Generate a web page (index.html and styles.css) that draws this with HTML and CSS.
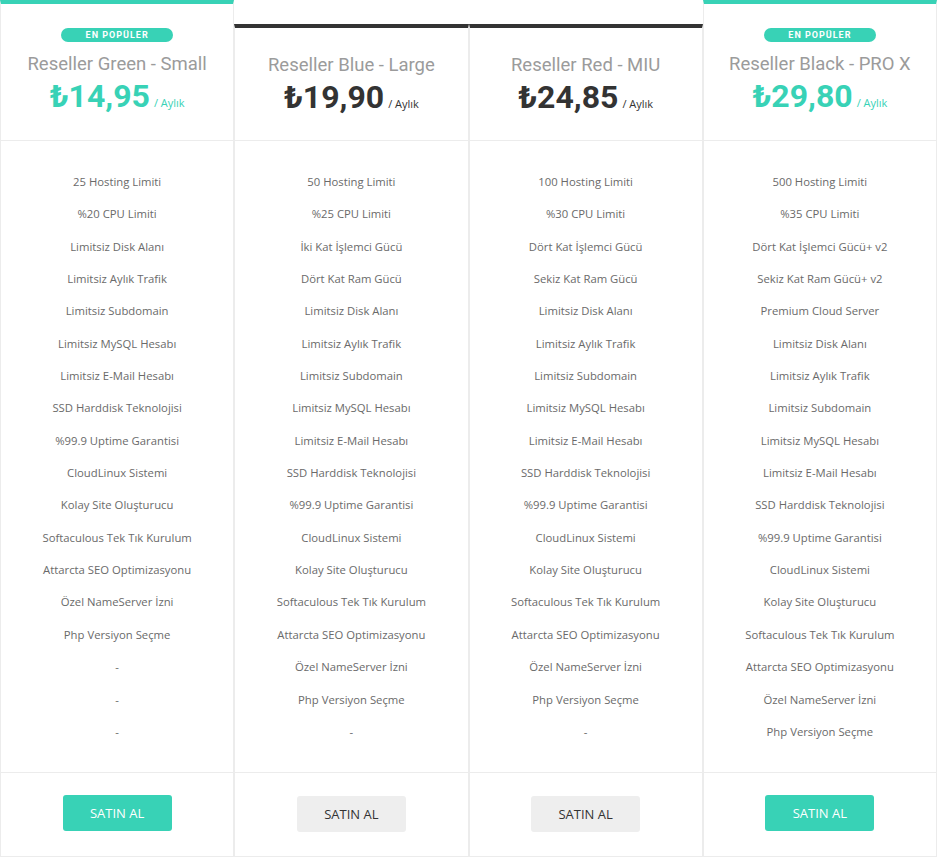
FILE: index.html
```html
<!DOCTYPE html>
<html lang="tr">
<head>
<meta charset="utf-8">
<title>Reseller Paketleri</title>
<link rel="stylesheet" href="styles.css">
</head>
<body>
<div class="plans">
  <div class="plan popular">
    <div class="plan-head">
      <span class="badge">EN POPÜLER</span>
      <div class="title">Reseller Green - Small</div>
      <div class="price"><span class="amount">₺14,95</span><span class="period">/ Aylık</span></div>
    </div>
    <ul class="features">
      <li>25 Hosting Limiti</li>
      <li>%20 CPU Limiti</li>
      <li>Limitsiz Disk Alanı</li>
      <li>Limitsiz Aylık Trafik</li>
      <li>Limitsiz Subdomain</li>
      <li>Limitsiz MySQL Hesabı</li>
      <li>Limitsiz E-Mail Hesabı</li>
      <li>SSD Harddisk Teknolojisi</li>
      <li>%99.9 Uptime Garantisi</li>
      <li>CloudLinux Sistemi</li>
      <li>Kolay Site Oluşturucu</li>
      <li>Softaculous Tek Tık Kurulum</li>
      <li>Attarcta SEO Optimizasyonu</li>
      <li>Özel NameServer İzni</li>
      <li>Php Versiyon Seçme</li>
      <li>-</li>
      <li>-</li>
      <li>-</li>
    </ul>
    <div class="plan-foot"><a class="btn btn-teal" href="#">SATIN AL</a></div>
  </div>

  <div class="plan normal">
    <div class="plan-head">
      <div class="title">Reseller Blue - Large</div>
      <div class="price"><span class="amount">₺19,90</span><span class="period">/ Aylık</span></div>
    </div>
    <ul class="features">
      <li>50 Hosting Limiti</li>
      <li>%25 CPU Limiti</li>
      <li>İki Kat İşlemci Gücü</li>
      <li>Dört Kat Ram Gücü</li>
      <li>Limitsiz Disk Alanı</li>
      <li>Limitsiz Aylık Trafik</li>
      <li>Limitsiz Subdomain</li>
      <li>Limitsiz MySQL Hesabı</li>
      <li>Limitsiz E-Mail Hesabı</li>
      <li>SSD Harddisk Teknolojisi</li>
      <li>%99.9 Uptime Garantisi</li>
      <li>CloudLinux Sistemi</li>
      <li>Kolay Site Oluşturucu</li>
      <li>Softaculous Tek Tık Kurulum</li>
      <li>Attarcta SEO Optimizasyonu</li>
      <li>Özel NameServer İzni</li>
      <li>Php Versiyon Seçme</li>
      <li>-</li>
    </ul>
    <div class="plan-foot"><a class="btn btn-grey" href="#">SATIN AL</a></div>
  </div>

  <div class="plan normal">
    <div class="plan-head">
      <div class="title">Reseller Red - MIU</div>
      <div class="price"><span class="amount">₺24,85</span><span class="period">/ Aylık</span></div>
    </div>
    <ul class="features">
      <li>100 Hosting Limiti</li>
      <li>%30 CPU Limiti</li>
      <li>Dört Kat İşlemci Gücü</li>
      <li>Sekiz Kat Ram Gücü</li>
      <li>Limitsiz Disk Alanı</li>
      <li>Limitsiz Aylık Trafik</li>
      <li>Limitsiz Subdomain</li>
      <li>Limitsiz MySQL Hesabı</li>
      <li>Limitsiz E-Mail Hesabı</li>
      <li>SSD Harddisk Teknolojisi</li>
      <li>%99.9 Uptime Garantisi</li>
      <li>CloudLinux Sistemi</li>
      <li>Kolay Site Oluşturucu</li>
      <li>Softaculous Tek Tık Kurulum</li>
      <li>Attarcta SEO Optimizasyonu</li>
      <li>Özel NameServer İzni</li>
      <li>Php Versiyon Seçme</li>
      <li>-</li>
    </ul>
    <div class="plan-foot"><a class="btn btn-grey" href="#">SATIN AL</a></div>
  </div>

  <div class="plan popular">
    <div class="plan-head">
      <span class="badge">EN POPÜLER</span>
      <div class="title">Reseller Black - PRO X</div>
      <div class="price"><span class="amount">₺29,80</span><span class="period">/ Aylık</span></div>
    </div>
    <ul class="features">
      <li>500 Hosting Limiti</li>
      <li>%35 CPU Limiti</li>
      <li>Dört Kat İşlemci Gücü+ v2</li>
      <li>Sekiz Kat Ram Gücü+ v2</li>
      <li>Premium Cloud Server</li>
      <li>Limitsiz Disk Alanı</li>
      <li>Limitsiz Aylık Trafik</li>
      <li>Limitsiz Subdomain</li>
      <li>Limitsiz MySQL Hesabı</li>
      <li>Limitsiz E-Mail Hesabı</li>
      <li>SSD Harddisk Teknolojisi</li>
      <li>%99.9 Uptime Garantisi</li>
      <li>CloudLinux Sistemi</li>
      <li>Kolay Site Oluşturucu</li>
      <li>Softaculous Tek Tık Kurulum</li>
      <li>Attarcta SEO Optimizasyonu</li>
      <li>Özel NameServer İzni</li>
      <li>Php Versiyon Seçme</li>
    </ul>
    <div class="plan-foot"><a class="btn btn-teal" href="#">SATIN AL</a></div>
  </div>
</div>
</body>
</html>
```

FILE: styles.css
```css
* { box-sizing: border-box; }

html, body {
  margin: 0;
  padding: 0;
  background: #ffffff;
}

body {
  font-family: "Open Sans", "Liberation Sans", sans-serif;
  width: 937px;
}

.plans {
  display: flex;
  align-items: flex-end;
}

.plan {
  flex: 1 1 0;
  min-width: 0;
  display: flex;
  flex-direction: column;
  border-left: 1px solid #ececec;
  border-right: 1px solid #ececec;
  border-bottom: 1px solid #ececec;
  text-align: center;
}

.plan.popular {
  border-top: 4px solid #38d2b6;
}

.plan.normal {
  border-top: 4px solid #333333;
}

.plan-head {
  display: flex;
  flex-direction: column;
  align-items: center;
  border-bottom: 1px solid #ececec;
  padding-bottom: 26px;
}

.popular .plan-head {
  padding-top: 24px;
}

.normal .plan-head {
  padding-top: 26px;
  padding-bottom: 25px;
}

.badge {
  display: block;
  width: 112px;
  height: 14px;
  line-height: 14px;
  border-radius: 7px;
  background: #38d2b6;
  color: #ffffff;
  font-family: "Roboto", "Liberation Sans", sans-serif;
  font-size: 9px;
  font-weight: 700;
  letter-spacing: 1px;
  margin-bottom: 11px;
}

.title {
  font-family: "Roboto", "Liberation Sans", sans-serif;
  font-size: 18.5px;
  line-height: 22px;
  color: #9b9b9b;
  font-weight: 400;
}

.price {
  margin-top: 3px;
  height: 36px;
  font-family: "Roboto", "Liberation Sans", sans-serif;
  font-size: 32px;
  font-weight: 700;
  line-height: 36px;
  white-space: nowrap;
}

.amount {
  color: #333333;
}

.period {
  font-family: "Open Sans", "Liberation Sans", sans-serif;
  font-size: 11px;
  font-weight: 400;
  line-height: 1;
  color: #333333;
  margin-left: 4px;
}

.popular .amount,
.popular .period {
  color: #38d2b6;
}

.features {
  list-style: none;
  margin: 0;
  padding: 25px 0 24px;
}

.features li {
  font-size: 11.3px;
  line-height: 32.35px;
  height: 32.35px;
  color: #6a6a6a;
  white-space: nowrap;
}

.plan-foot {
  border-top: 1px solid #ececec;
  padding: 22px 0 25px;
  display: flex;
  justify-content: center;
}

.btn {
  display: block;
  width: 109px;
  height: 36px;
  line-height: 36px;
  font-size: 13px;
  text-decoration: none;
  border-radius: 3px;
}

.btn-teal {
  background: #38d2b6;
  color: #ffffff;
}

.btn-grey {
  background: #eeeeee;
  color: #333333;
  margin-top: 1px;
  margin-bottom: -1px;
}
```
